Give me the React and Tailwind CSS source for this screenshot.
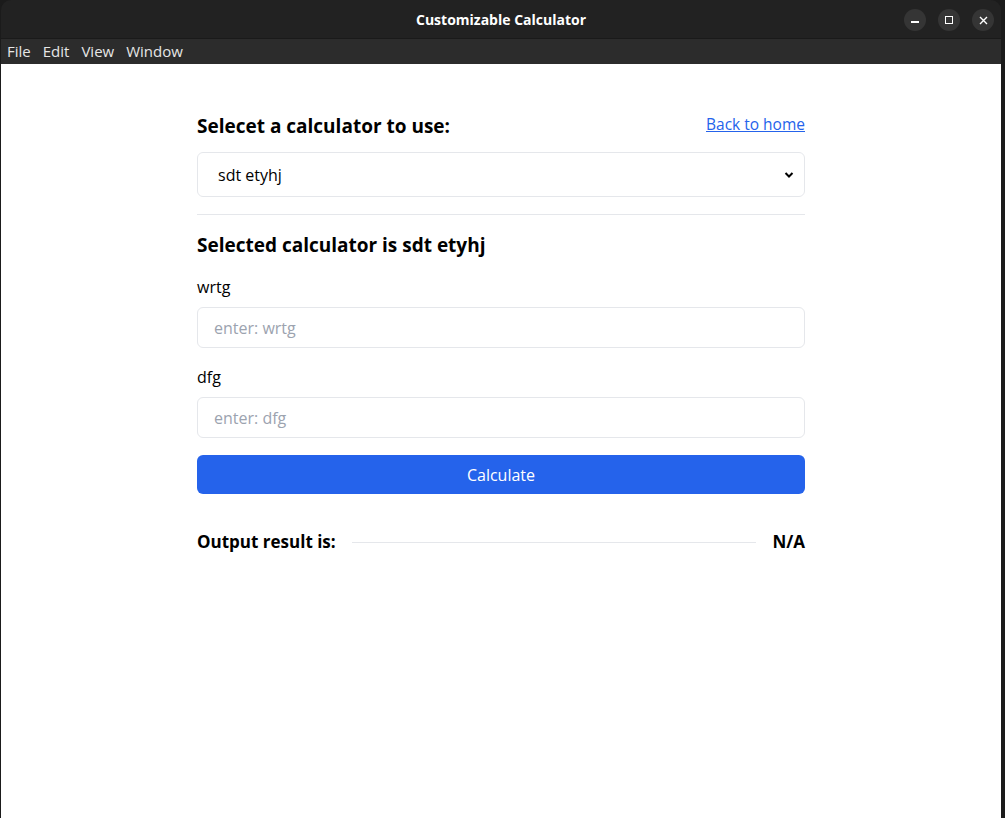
export default function App() {
  const font = { fontFamily: '"Open Sans", "Noto Sans", sans-serif' };
  return (
    <div className="w-[1005px] h-[818px] bg-[#1b1b1b] flex flex-col overflow-hidden" style={font}>
      <div className="flex-1 flex flex-col mr-[4px] ml-[1px] rounded-t-[10px] overflow-hidden">
        {/* Title bar */}
        <div className="h-[38px] bg-[#222222] flex items-center relative shrink-0">
          <div className="flex-1 text-center text-[14px] font-bold text-white">Customizable Calculator</div>
          <div className="absolute right-[7px] top-[9px] flex gap-[12px]">
            <div className="w-[22px] h-[22px] rounded-full bg-[#353535] flex items-center justify-center">
              <div className="w-[8px] h-[1.5px] bg-white mt-[4px]" />
            </div>
            <div className="w-[22px] h-[22px] rounded-full bg-[#353535] flex items-center justify-center">
              <div className="w-[8px] h-[8px] border border-white" />
            </div>
            <div className="w-[22px] h-[22px] rounded-full bg-[#353535] flex items-center justify-center">
              <svg width="9" height="9" viewBox="0 0 9 9"><path d="M1 1L8 8M8 1L1 8" stroke="white" strokeWidth="1.4" /></svg>
            </div>
          </div>
        </div>
        {/* Menu bar */}
        <div className="h-[26px] bg-[#2c2c2c] flex items-center gap-[12px] px-[6px] text-[15px] text-[#e6e6e6] shrink-0 border-t border-[#1a1a1a]">
          <span>File</span>
          <span>Edit</span>
          <span>View</span>
          <span>Window</span>
        </div>
        {/* Content */}
        <div className="flex-1 bg-white">
          <div className="max-w-[608px] mx-auto pt-[48px] text-black">
            <div className="flex items-center justify-between h-[28px]">
              <h2 className="text-[19px] font-bold">Selecet a calculator to use:</h2>
              <a href="#" className="text-[15.5px] text-[#2563eb] underline -mt-[3px]">Back to home</a>
            </div>
            <div className="mt-[12px] h-[45px] border border-[#e5e7eb] rounded-[6px] flex items-center justify-between pl-[20px] pr-[10px] text-[16px]">
              <span>sdt etyhj</span>
              <svg width="10" height="8" viewBox="0 0 10 8"><path d="M1.5 2L5 5.5L8.5 2" stroke="black" strokeWidth="2" fill="none" /></svg>
            </div>
            <div className="mt-[17px] border-t border-[#e5e7eb]" />
            <h3 className="mt-[16px] text-[19px] font-bold h-[28px] leading-[28px]">Selected calculator is sdt etyhj</h3>
            <div className="mt-[16px] text-[16px] h-[24px] leading-[24px]">wrtg</div>
            <input
              placeholder="enter: wrtg"
              className="mt-[8px] w-full h-[41px] border border-[#e5e7eb] rounded-[6px] px-[16px] text-[16px] placeholder:text-[#9ca3af] outline-none"
            />
            <div className="mt-[17px] text-[16px] h-[24px] leading-[24px]">dfg</div>
            <input
              placeholder="enter: dfg"
              className="mt-[8px] w-full h-[41px] border border-[#e5e7eb] rounded-[6px] px-[16px] text-[16px] placeholder:text-[#9ca3af] outline-none"
            />
            <button className="mt-[17px] w-full h-[39px] bg-[#2563eb] text-white text-[16px] rounded-[6px]">Calculate</button>
            <div className="mt-[35px] flex items-center gap-[16px] h-[26px]">
              <span className="text-[17px] font-bold">Output result is:</span>
              <div className="flex-1 border-t border-[#e5e7eb]" />
              <span className="text-[17px] font-bold">N/A</span>
            </div>
          </div>
        </div>
      </div>
    </div>
  );
}
